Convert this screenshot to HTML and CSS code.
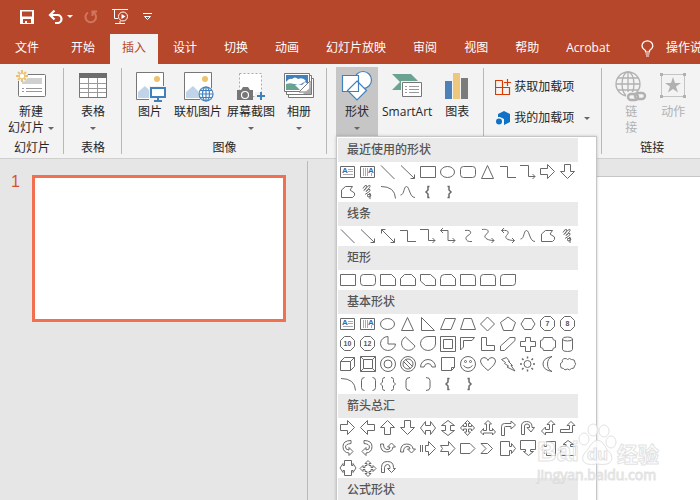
FILE: index.html
```html
<!DOCTYPE html>
<html lang="zh-CN">
<head>
    <meta charset="UTF-8">
    <meta name="viewport" content="width=device-width, initial-scale=1.0">
    <title>PowerPoint</title>
    <link rel="stylesheet" href="styles.css">
</head>
<body>
    <header class="titlebar">
        <button class="quick save" aria-label="保存">
            <svg width="14" height="14" viewBox="0 0 14 14"><path d="M0 0h14v14H0zM2 1.5v5h10v-5zM3 9v4h2v-2h2v2h4V9z" fill="#fff" fill-rule="evenodd"/></svg>
        </button>
        <button class="quick undo" aria-label="撤消">
            <svg width="26" height="14" viewBox="0 0 26 14"><path d="M2 5h7.5a4 4 0 0 1 0 8H7M6.500 .5L2 5l4.500 4.500" fill="none" stroke="#fff" stroke-width="2.200"/><path d="M19 5h6l-3 3z" fill="#fff"/></svg>
        </button>
        <button class="quick redo" aria-label="重复">
            <svg width="14" height="14" viewBox="0 0 14 14"><path d="M4 2.500a5.300 5.300 0 1 0 5.500 0M8.500 6V1.500H13" fill="none" stroke="#d07660" stroke-width="2"/></svg>
        </button>
        <button class="quick show" aria-label="从头开始">
            <svg width="17" height="16" viewBox="0 0 17 16" fill="none" stroke="#fff"><path d="M0 .5h16M2.500 1v8.500H6M8 12v2.500M3 14.500h10"/><circle cx="11" cy="7.500" r="4.500"/><path d="M9.500 5v5l4-2.500z" fill="#fff" stroke="none"/></svg>
        </button>
        <button class="quick" aria-label="自定义快速访问工具栏">
            <svg width="9" height="8" viewBox="0 0 9 8" fill="none" stroke="#fff"><path d="M0 .5h9M1.500 3.500h6l-3 3z"/></svg>
        </button>
    </header>

    <nav class="tabs">
        <a class="tab file" href="#">文件</a>
        <a class="tab" href="#">开始</a>
        <a class="tab active" href="#">插入</a>
        <a class="tab" href="#">设计</a>
        <a class="tab" href="#">切换</a>
        <a class="tab" href="#">动画</a>
        <a class="tab" href="#">幻灯片放映</a>
        <a class="tab" href="#">审阅</a>
        <a class="tab" href="#">视图</a>
        <a class="tab" href="#">帮助</a>
        <a class="tab" href="#">Acrobat</a>
        <a class="tab tell" href="#">
            <svg width="13" height="17" viewBox="0 0 13 17" fill="none" stroke="#fff" stroke-width="1.200"><path d="M4.500 12V10.500Q1 8.500 1 5.800a5.400 5 0 0 1 10.800 0Q11.800 8.500 8.500 10.500V12zM4.500 14h4M5 16h3"/></svg>
            操作说
        </a>
    </nav>

    <section class="ribbon">
        <div class="group slides">
            <div class="tools">
                <button class="tool">
                    <svg width="32" height="32" viewBox="0 0 32 32"><rect x="3.500" y="4.500" width="27" height="22" rx="1" fill="#fff" stroke="#777"/><path d="M7 8h20v6H7z" fill="#d0d0d0"/><path d="M7 18.500h2M11 18.500h16M7 21.500h2M11 21.500h16" stroke="#999"/><circle cx="7" cy="6" r="6" fill="#f3f3f3"/><path d="M7 0v12M1 6h12M3 2l8 8M11 2l-8 8" stroke="#ecc26e" stroke-width="2"/><circle cx="7" cy="6" r="2.200" fill="#fff"/></svg>
                    <span>新建</span>
                    <span>幻灯片<i class="caret"></i></span>
                </button>
            </div>
            <div class="caption">幻灯片</div>
        </div>
        <div class="group table">
            <div class="tools">
                <button class="tool">
                    <svg width="32" height="32" viewBox="0 0 32 32"><path d="M2.500 3.500h27v24h-27z" fill="#fff" stroke="#777"/><path d="M2 3h28v5H2z" fill="#6d6d6d"/><path d="M3 13.500h26M3 18.500h26M3 22.500h26M11.500 8v19M20.500 8v19" stroke="#999"/></svg>
                    <span>表格</span>
                    <span><i class="caret"></i></span>
                </button>
            </div>
            <div class="caption">表格</div>
        </div>
        <div class="group images">
            <div class="tools">
                <button class="tool">
                    <svg width="32" height="32" viewBox="0 0 32 32"><path d="M2.500 2.500h27v27h-27z" fill="#fff" stroke="#777"/><circle cx="23" cy="9" r="3" fill="#ecc26e"/><path d="M4 28v-6l7-6 6 6v6z" fill="#c0d3e8"/><path d="M15 16h17v16H15z" fill="#f3f3f3"/><path d="M17 18h14v9H17z" fill="#fff" stroke="#4180bd" stroke-width="2"/><path d="M24 27v4M20 31h8" stroke="#4180bd" stroke-width="2"/></svg>
                    <span>图片</span>
                </button>
                <button class="tool">
                    <svg width="32" height="32" viewBox="0 0 32 32"><path d="M2.500 2.500h27v27h-27z" fill="#fff" stroke="#777"/><circle cx="23" cy="9" r="3" fill="#ecc26e"/><path d="M4 28v-6l7-6 6 6v6z" fill="#c0d3e8"/><circle cx="24" cy="24" r="8" fill="#f3f3f3"/><g fill="#fff" stroke="#4180bd" stroke-width="1.200"><circle cx="24" cy="24" r="7"/><ellipse cx="24" cy="24" rx="3.500" ry="7"/><path d="M17 24h14M24 17v14M18 20.500h12M18 27.500h12"/></g></svg>
                    <span>联机图片</span>
                </button>
                <button class="tool">
                    <svg width="32" height="32" viewBox="0 0 32 32"><path d="M4.500 3.500h22v23h-22z" fill="#fff" stroke="#aaa" stroke-dasharray="2 2"/><path d="M2 20h4l2-3h5l2 3h3v10H2z" fill="#777"/><circle cx="10" cy="25" r="3.500" fill="#777" stroke="#fff" stroke-width="1.200"/><path d="M20 22h10v9H20z" fill="#f3f3f3"/><path d="M26 22v8M22 26h8" stroke="#4180bd" stroke-width="2"/></svg>
                    <span>屏幕截图</span>
                    <span><i class="caret"></i></span>
                </button>
                <button class="tool">
                    <svg width="32" height="32" viewBox="0 0 32 32" stroke="#777"><path d="M5.500 8.500h25v19h-25z" fill="#fff"/><path d="M3.500 5.500h25v19h-25z" fill="#fff"/><path d="M1.500 3.500h25v18h-25z" fill="#fff"/><path d="M3 5h22v9l-3-2-3 3-4-1-12 3z" fill="#4180bd" stroke="none"/><path d="M3 12q3-4 6-3 3-3 6 0 5-2 8 2l-5 3H3z" fill="#fff" stroke="none"/><path d="M3 14q6-2 9 1l5 5H3z" fill="#6aa392" stroke="none"/><path d="M16 22l11-11v11z" fill="#fff"/><path d="M21 23l7-6v7h-8z" fill="#aaa" stroke="none"/></svg>
                    <span>相册</span>
                    <span><i class="caret"></i></span>
                </button>
            </div>
            <div class="caption">图像</div>
        </div>
        <div class="group illustrations">
            <div class="tools">
                <div class="dropdown">
                    <button class="tool open" aria-expanded="true">
                        <svg width="32" height="32" viewBox="0 0 32 32" fill="#fff" stroke="#4180bd" stroke-width="1.200"><circle cx="22" cy="10" r="8.500"/><path d="M1.500 5.500h16v16h-16zM16 11l9.500 9.500L16 30l-9.500-9.500z"/></svg>
                        <span>形状</span>
                        <span><i class="caret"></i></span>
                    </button>
                    <div class="gallery" id="gallery"></div>
                </div>
                <button class="tool">
                    <svg width="32" height="32" viewBox="0 0 32 32"><path d="M1 4h19l8 8-8 8H1l8-8z" fill="#6aa392"/><path d="M10 11h22v17H10z" fill="#f3f3f3"/><path d="M11.500 12.500h19v14h-19z" fill="#fff" stroke="#777"/><path d="M14 16.500h2M18 16.500h10M14 19.500h2M18 19.500h10M14 22.500h2M18 22.500h10" stroke="#999"/></svg>
                    <span>SmartArt</span>
                </button>
                <button class="tool">
                    <svg width="32" height="32" viewBox="0 0 32 32"><path d="M4 11h7v18H4z" fill="#4c82b8"/><path d="M12 3h7v26h-7z" fill="#ecc77c"/><path d="M20 8h7v21h-7z" fill="#7b7b7b"/></svg>
                    <span>图表</span>
                </button>
            </div>
        </div>
        <div class="group addins">
            <button class="row">
                <svg width="16" height="16" viewBox="0 0 16 16" fill="none" stroke="#d83b01" stroke-width="1.200"><path d="M7.500 1.500h-7v14h14V8.500H.5M7.500 1.500v14M12.500 0v7M9 3.500h7"/></svg>
                获取加载项
            </button>
            <button class="row">
                <svg width="16" height="16" viewBox="0 0 16 16" fill="#0f72c6"><path d="M3 4l6-3 6 3v8l-6 3V9L5 7H3z"/><circle cx="4" cy="11.500" r="3"/></svg>
                我的加载项<i class="caret"></i>
            </button>
        </div>
        <div class="group links">
            <div class="tools">
                <button class="tool" disabled>
                    <svg width="32" height="32" viewBox="0 0 32 32" fill="none" stroke="#b1b1b1" stroke-width="1.300"><circle cx="13" cy="14" r="12"/><ellipse cx="13" cy="14" rx="6" ry="12"/><path d="M13 2v24M1 14h24M3 8h20M3 20h20"/><path d="M11 22h21v9H11z" fill="#f3f3f3" stroke="none"/><rect x="13" y="24" width="10" height="6" rx="3" stroke-width="2.400"/><rect x="20" y="23" width="10" height="6" rx="3" stroke-width="2.400"/></svg>
                    <span>链</span>
                    <span>接</span>
                </button>
                <button class="tool" disabled>
                    <svg width="32" height="32" viewBox="0 0 32 32" fill="#b1b1b1"><path d="M4.500 4.500h23v22h-23z" fill="none" stroke="#c4c4c4"/><path d="M3 3h3v3H3zM26 3h3v3h-3zM3 25h3v3H3zM26 25h3v3h-3zM16 7l2 6h6l-5 3.500 2 6-5-3.500-5 3.500 2-6L8 13h6z"/></svg>
                    <span>动作</span>
                </button>
            </div>
            <div class="caption">链接</div>
        </div>
    </section>

    <main class="workspace">
        <aside class="thumbs">
            <span class="number">1</span>
            <a class="thumb" href="#" aria-label="幻灯片 1"></a>
        </aside>
        <div class="editor">
            <div class="slide"></div>
        </div>
    </main>

    <svg class="watermark" width="130" height="66" viewBox="0 0 130 66">
        <text x="3" y="43" class="mark latin">Bai</text>
        <g class="mark">
            <ellipse cx="50" cy="21" rx="5" ry="6"/>
            <ellipse cx="59" cy="12" rx="5" ry="6"/>
            <ellipse cx="70" cy="13" rx="5" ry="6"/>
            <ellipse cx="77" cy="24" rx="5" ry="6"/>
            <path d="M63 22q5 0 8 6t6 8q3 8-4 10-4 1-10 0-6 1-10 0-7-3-3-10 3-3 6-8t7-6z"/>
        </g>
        <text x="53" y="42" class="mark du">du</text>
        <text x="83" y="44" class="mark cjk">经验</text>
        <text x="3" y="62" class="mark url">jingyan.baidu.com</text>
    </svg>
    <script src="shapes.js"></script>
</body>
</html>
```

FILE: styles.css
```css
* {
    box-sizing: border-box;
}

body {
    margin: 0;
    height: 100vh;
    display: flex;
    flex-direction: column;
    overflow: hidden;
    background: #e6e6e6;
    color: #262626;
    font-family: "Open Sans", "Noto Sans CJK SC", sans-serif;
    font-size: 12px;
    line-height: 16px;
}

button {
    padding: 0;
    border: 0;
    background: none;
    color: inherit;
    font: inherit;
}

a {
    color: inherit;
    text-decoration: none;
}

svg {
    display: block;
    flex: none;
}

.titlebar {
    display: flex;
    align-items: center;
    gap: 14px;
    height: 34px;
    padding-left: 20px;
    background: #b7472a;
}

.titlebar .undo {
    margin-right: -4px;
}

.tabs {
    display: flex;
    gap: 3px;
    height: 30px;
    overflow: hidden;
    background: #b7472a;
    color: #fff;
    white-space: nowrap;
}

.tab {
    flex: none;
    padding: 6px 12px;
}

.tab.file {
    padding-left: 15px;
    padding-right: 17px;
}

.tab.active {
    background: #f3f3f3;
    color: #b7472a;
}

.tab.tell {
    display: flex;
    gap: 12px;
    padding-left: 16px;
}

.ribbon {
    display: flex;
    height: 95px;
    padding-top: 3px;
    background: #f3f3f3;
    border-bottom: 1px solid #d0d0d0;
}

.group {
    position: relative;
    display: flex;
    flex-direction: column;
    flex: none;
    padding: 0 6px;
}

/* separator line on the right of each group */
.group::after {
    content: "";
    position: absolute;
    top: 1px;
    right: 0;
    bottom: 4px;
    width: 1px;
    background: #b8b8b8;
}

.group.links::after {
    display: none;
}

.tools {
    display: flex;
    gap: 1px;
    height: 70px;
}

.caption {
    padding-top: 3px;
    text-align: center;
}

.tool {
    display: flex;
    flex-direction: column;
    align-items: center;
    min-width: 42px;
    height: 70px;
    padding: 3px 2px 0;
    white-space: nowrap;
}

.tool svg {
    margin-bottom: 2px;
}

.tool.open {
    background: #c6c6c6;
}

.tool:disabled {
    color: #b1b1b1;
}

.caret {
    display: inline-block;
    border: 3px solid transparent;
    border-top-color: #666;
    border-bottom: 0;
    vertical-align: 2px;
}

.slides .caret {
    margin-left: 4px;
}

.slides {
    width: 64px;
}

.table {
    width: 58px;
    padding: 0 8px;
}

.images {
    padding: 0 7px;
}

.illustrations {
    padding: 0 6px 0 9px;
}

.illustrations .tools {
    gap: 2px;
}

.addins {
    gap: 15px;
    width: 118px;
    padding: 12px 11px 0;
}

.row {
    display: flex;
    align-items: center;
    gap: 3px;
    white-space: nowrap;
}

.row .caret {
    margin-left: 7px;
}

.links {
    padding-left: 8px;
}

.links .tools {
    gap: 0;
}

.dropdown {
    position: relative;
}

.gallery {
    position: absolute;
    z-index: 2;
    top: 69px;
    left: 0;
    width: 261px;
    padding: 1px;
    background: #fff;
    border: 1px solid #c6c6c6;
    box-shadow: 0 0 3px rgba(0, 0, 0, 0.2);
}

.gallery h2 {
    width: 240px;
    margin: 0;
    padding: 4px 9px;
    background: #eaeaea;
    color: #555;
    font-size: 12px;
    font-weight: 500;
    line-height: 16px;
}

.shapes {
    display: grid;
    grid-template-columns: repeat(12, 20px);
    grid-auto-rows: 20px;
}

.shapes svg {
    fill: none;
    stroke: #696969;
}

.shapes text {
    fill: #555;
    stroke: none;
    font: bold 7px "Liberation Sans", sans-serif;
    text-anchor: middle;
}

.shapes .letter {
    fill: #2e6db4;
    font-size: 8px;
}

.workspace {
    display: flex;
    flex: 1;
    padding-top: 2px;
}

.thumbs {
    display: flex;
    align-items: flex-start;
    gap: 12px;
    width: 44%;
    padding: 14px 21px 0 11px;
    border-right: 1px solid #bababa;
}

.number {
    color: #d35334;
    font: 16px/14px "Liberation Sans", sans-serif;
}

.thumb {
    flex: 1;
    aspect-ratio: 254 / 147;
    background: #fff;
    border: 3px solid #f07050;
}

.editor {
    display: flex;
    flex: 1;
    padding: 15px 0 0 56px;
}

.slide {
    flex: 1;
    background: #fff;
    border-top: 1px solid #c6c6c6;
}

.watermark {
    position: absolute;
    z-index: 3;
    right: 36px;
    bottom: 16px;
    opacity: 0.8;
}

.mark {
    fill: #fff;
    stroke: #dcdcdc;
    stroke-width: 1px;
}

.mark.latin {
    font: bold 27px "Liberation Sans", sans-serif;
}

.mark.du {
    font: bold 17px "Liberation Sans", sans-serif;
}

.mark.cjk {
    font: bold 21px "Noto Sans CJK SC", sans-serif;
}

.mark.url {
    font: 14px "Open Sans", sans-serif;
}
```

FILE: shapes.js
```js
// every shape is drawn in a 20x20 cell
const octagon = '<path d="M6.500 2.500h6l4 4v6l-4 4h-6l-4-4v-6z"/>';
const path = d => `<path d="${d}"/>`;

const shapes = {
    textBox: '<path d="M2.500 4.500h14v11h-14z"/><path d="M10 7.500h5M10 9.500h5M5 12.500h10" stroke="#aaa"/><text class="letter" x="7" y="11">A</text>',
    verticalTextBox: '<path d="M2.500 4.500h14v11h-14z"/><path d="M5.500 6v8M7.500 6v8M9.500 6v8M13.500 11v3" stroke="#aaa"/><text class="letter" x="13" y="11">A</text>',
    line: path('M3 3.500L16.500 17'),
    arrow: path('M3 3.500L16.500 16.500M16.500 12.500v4h-4'),
    doubleArrow: path('M3.500 3.500l13 13M16.500 12.500v4h-4M3.500 7.500v-4h4'),
    rect: path('M2.500 4.500h15v11h-15z'),
    ellipse: '<ellipse cx="9.500" cy="10" rx="7" ry="5.500"/>',
    roundRect: '<rect x="2.500" y="4.500" width="15" height="11" rx="3"/>',
    triangle: path('M9.500 3.500l6 13h-12z'),
    elbow: path('M2 4.500h7.500v11H18'),
    elbowArrow: path('M2 3.500h8.500v11H17M14.500 12l2.500 2.500-2.500 2.500'),
    elbowDouble: path('M2.500 4.500h7.500v10h7M14.500 12l2.500 2.500-2.500 2.500M5 2L2.500 4.500 5 7'),
    right: path('M2.500 6.500h7v-4l7 7-7 7v-4h-7z'),
    left: path('M16.500 6.500h-7v-4l-7 7 7 7v-4h7z'),
    up: path('M6.500 16.500v-7h-4l7-7 7 7h-4v7z'),
    down: path('M6.500 2.500v7h-4l7 7 7-7h-4v-7z'),
    freeform: path('M3.500 15.500V8l4-3.500h7L12 8l4.500 3v2.500l-2 2z'),
    scribble: path('M5 6.500q2-4 3.500-3 1 1-2.500 5 5-6 6-5 1 1-4 6 3-3 4-2t-2 3-3 2M9 13q4-2 4 0t-3 2q-2-1 2-4v6'),
    arc: path('M3 4.500q14 0 14.500 12'),
    curve: path('M2.500 13c4 0 3-8.500 6-8.500s3 11 8.500 11'),
    leftBrace: '<path d="M11.500 4.500H10V8l-2 2 2 2v3.500h1.500" stroke-width="1.500"/>',
    rightBrace: '<path d="M9.500 4.500H11V8l2 2-2 2v3.500H9.500" stroke-width="1.500"/>',
    curved: path('M7 4.500c7-1 7 3 3 5s-2 7 4 6'),
    curvedArrow: path('M4 3.500c8-1 7 3 4 5s0 6 8 6M13.500 12l2.500 2.500-2.500 2.500'),
    curvedDouble: path('M3.500 4.500c9-1 7 3 5 5s0 5 8 5M14 12l2.500 2.500L14 17M6 2L3.500 4.500 6 7'),
    snip1: path('M2.500 4.500h11l4 4v7h-15z'),
    snip2: path('M6.500 4.500h7l4 4v7h-15v-7z'),
    snipDiag: path('M2.500 4.500h10l5 4.500v6.500h-10l-5-4.500z'),
    snipRound: path('M6.500 4.500h7l4 4v7h-15v-7q0-4 4-4z'),
    round1: path('M2.500 4.500h12q3 0 3 3v8h-15z'),
    round2: path('M5.500 4.500h9q3 0 3 3v8h-15v-8q0-3 3-3z'),
    roundDiag: path('M5.500 4.500h12v8q0 3-3 3h-12v-8q0-3 3-3z'),
    rightTriangle: path('M3.500 3.500v13h13z'),
    parallelogram: path('M7 4.500h10.500l-4.500 11H2.500z'),
    trapezoid: path('M6 4.500h7.500l4 11h-15z'),
    diamond: path('M9.500 3l7 7-7 7-7-7z'),
    pentagon: path('M10 3l7.500 5.500-3 8h-9l-3-8z'),
    hexagon: path('M6.500 4.500h7l3.500 5.500-3.500 5.500h-7L3 10z'),
    heptagon: octagon + '<text x="9.500" y="12">7</text>',
    octagon: octagon + '<text x="9.500" y="12">8</text>',
    decagon: octagon + '<text x="9.500" y="12">10</text>',
    dodecagon: octagon + '<text x="9.500" y="12">12</text>',
    pie: path('M10 2.500a7.500 7 0 1 0 7.500 7.500H10z'),
    chord: path('M7.500 3a7 7 0 1 0 9.500 9z'),
    teardrop: path('M17.500 2.500h-7.500a7.500 7 0 1 0 7.500 7.500z'),
    frame: path('M2.500 2.500h15v15h-15zM5.500 5.500h9v9h-9z'),
    halfFrame: path('M2.500 3.500h14L14 6.500H5.500V13l-3 3z'),
    lShape: path('M3.500 3.500h5v8h8v5h-13z'),
    stripe: path('M12 3.500h5v3L6.500 16.500h-4V12z'),
    plus: path('M7.500 3.500h5v4h5v5h-5v5h-5v-5h-5v-5h5z'),
    plaque: path('M5.500 3.500h9q0 3 3 3v7q-3 0-3 3h-9q0-3-3-3v-7q3 0 3-3z'),
    can: path('M4.500 5v10.500q0 2 5 2t5-2V5M4.500 5q0-2 5-2t5 2-5 2-5-2z'),
    cube: path('M2.500 7.500h10v9h-10zM2.500 7.500l4-4h10l-4 4M16.500 3.500v9l-4 4'),
    bevel: path('M2.500 2.500h15v15h-15zM5.500 5.500h9v9h-9zM2.500 2.500l3 3M17.500 2.500l-3 3M2.500 17.500l3-3M17.500 17.500l-3-3'),
    donut: '<circle cx="10" cy="10" r="7.500"/><circle cx="10" cy="10" r="4"/>',
    noSymbol: '<circle cx="10" cy="10" r="7.500"/><circle cx="10" cy="10" r="5"/><path d="M5.500 7.500l7 7M7.500 5.500l7 7"/>',
    blockArc: path('M2.500 13a7.500 7.500 0 0 1 15 0h-3.500q-1-3.500-4-3.500t-4 3.500z'),
    foldedCorner: path('M3.500 3.500h13v10l-3 3h-10zM16.500 13.500h-3v3'),
    smiley: '<circle cx="10" cy="10" r="7.500"/><circle cx="7.500" cy="7.500" r="1"/><circle cx="12.500" cy="7.500" r="1"/><path d="M5.500 11.500q4.500 5 9 0"/>',
    heart: path('M10 16.500Q2.500 10.500 2.500 7q0-3 3.500-3.500 3 0 4 3 1-3 4-3 3.500.5 3.500 3.500 0 3.500-7.500 9.500z'),
    lightning: path('M3.500 5.500l5-2 3 4H10.500l4 4h-1.500l4 5.500-8-4 1.500-1-4-2.500 1-1z'),
    sun: '<circle cx="9.500" cy="10" r="3.500"/><path d="M9.500 2.500v2M9.500 15.500v2M2 10h2M15 10h2M4 4.500l1.500 1.500M13.500 14l1.500 1.500M4 15.500L5.500 14M13.500 6L15 4.500" stroke-width="1.500"/>',
    moon: path('M14 2.500q-9 1.500-9 7.500t9 7.500q-4.500-2-4.500-7.500T14 2.500z'),
    cloud: path('M4.500 8q-1-3 2.500-3.500 2 0 2.500 1 2-2 4 0 3.500-.5 3.500 3 1.500 2-.5 3.500 0 3-3 2.500-2 2.500-4 .5-3 2-4-.5-3.500 0-3-3-1-2.500 2-3.500z'),
    doubleBracket: path('M6.500 3.500q-3 0-3 3v7q0 3 3 3M14.500 3.500q3 0 3 3v7q0 3-3 3'),
    doubleBrace: path('M7 3.500q-2.500 0-2.500 2v2.500l-2 2 2 2v2.500q0 2 2.500 2M13 3.500q2.500 0 2.500 2v2.500l2 2-2 2v2.500q0 2-2.500 2'),
    leftBracket: path('M12 3.500q-4 0-4 3v7q0 3 4 3'),
    rightBracket: path('M8 3.500q4 0 4 3v7q0 3-4 3'),
    leftRight: path('M2.500 10l5-6.500v4h5v-4l5 6.500-5 6.500v-4h-5v4z'),
    upDown: path('M10 2.500l6.500 5h-4v5h4l-6.500 5-6.500-5h4v-5h-4z'),
    quad: path('M9.500 2.500l3 3h-2v3h3v-2l3 3.500-3 3v-2h-3v3h2l-3 3.500-3-3.500h2v-3h-3v2l-3-3 3-3.500v2h3v-3h-2z'),
    leftRightUp: path('M10 2.500l3.500 3.500h-2v6.500h3v-2l3 3.500-3 3v-2h-9v2l-3-3 3-3.500v2h3V6h-2z'),
    bent: path('M3.500 17.500v-9q0-3 3-3h6.500V3l4.500 4-4.500 4V8.500H7.500q-1 0-1 1v8z'),
    uTurn: path('M3.500 16.500V8q0-4.500 5-4.500t5.500 4.500v1.500h2.500L13 14l-4-4.500h2.500V8q0-2-2.500-2t-2.500 2v8.500z'),
    leftUp: path('M13 2.500l4 4h-2.500v8h-7v2.500l-4-4 4-4v2.500h4v-5H9z'),
    bentUp: path('M13 3.500l4 4h-2.500v7h-12v-3h9v-4H9z'),
    curvedRight: path('M13 2.500q-8 0-8 6t6 6.500v2.500l4-4-4-4V12q-3.500 0-3.500-3T13 5.500z'),
    curvedLeft: path('M6 2.500q8 0 8 6T8 15v2.500l-4-4 4-4V12q3.500 0 3.500-3T6 5.500z'),
    curvedUp: path('M2.500 6q0 8 6 8t6.500-5h2.500l-4-4-4 4H12q0 3-3 2.500Q5.500 11 5.500 6z'),
    curvedDown: path('M2.500 14q0-8 6-8t6.500 5h2.500l-4 4-4-4H12q0-3-3-2.500-3.500.5-3.500 5.500z'),
    striped: path('M2.500 7v7M4.500 7v7M7.500 7.500h3v-4l7 7-7 7v-4h-3z'),
    notched: path('M2.500 7.500h8v-4l6.500 7-6.500 7v-4h-8l2-3z'),
    homePlate: path('M2.500 5.500h9.500l5 5-5 5H2.500z'),
    chevron: path('M3 5.500h6.500l5 5-5 5H3l5-5z'),
    calloutRight: path('M2.500 3.500h9v5h2v-3l4 5-4 5v-3h-2v5h-9z'),
    calloutDown: path('M2.500 2.500h15v9h-5v2h3l-5 4-5-4h2v-2h-5z'),
    calloutLeft: path('M17.500 3.500h-9v5h-2v-3l-4 5 4 5v-3h2v5h9z'),
    calloutUp: path('M2.500 17.500h15v-9h-5v-2h3l-5.500-4-5 4h3v2h-5z'),
    calloutLeftRight: path('M6.500 2.500h7v5h1.500v-2l3 4.500-3 4.500v-2h-1.500v5h-7v-5H5v2L2 10l3-4.500v2h1.500z'),
    calloutQuad: path('M10 2.500l3 3h-2v2h2v2h2v-2l3 3-3 3v-2h-2v2h-2v2h2l-3 3-3-3h2v-2H7v-2H5v2l-3-3 3-3v2h2v-2h2v-2H7z'),
    circular: path('M3.500 14.500v-5q0-6 6-6t6 6v1h2l-4 4-4-4h2.500v-1q0-3-2.500-3t-3 3v5z')
};

const gallery = [
    ['最近使用的形状', 'textBox verticalTextBox line arrow rect ellipse roundRect triangle elbow elbowArrow right down freeform scribble arc curve leftBrace rightBrace'],
    ['线条', 'line arrow doubleArrow elbow elbowArrow elbowDouble curved curvedArrow curvedDouble curve freeform scribble'],
    ['矩形', 'rect roundRect snip1 snip2 snipDiag snipRound round1 round2 roundDiag'],
    ['基本形状', 'textBox verticalTextBox ellipse triangle rightTriangle parallelogram trapezoid diamond pentagon hexagon heptagon octagon decagon dodecagon pie chord teardrop frame halfFrame lShape stripe plus plaque can cube bevel donut noSymbol blockArc foldedCorner smiley heart lightning sun moon cloud arc doubleBracket doubleBrace leftBracket rightBracket leftBrace rightBrace'],
    ['箭头总汇', 'right left up down leftRight upDown quad leftRightUp bent uTurn leftUp bentUp curvedRight curvedLeft curvedUp curvedDown striped notched homePlate chevron calloutRight calloutDown calloutLeft calloutUp calloutLeftRight calloutQuad circular'],
    ['公式形状', '']
];

document.getElementById('gallery').innerHTML = gallery.map(([title, names]) => {
    const buttons = names.split(' ').filter(Boolean).map(name =>
        `<button aria-label="${name}"><svg width="20" height="20" viewBox="0 0 20 20">${shapes[name]}</svg></button>`
    );
    return `<h2>${title}</h2><div class="shapes">${buttons.join('')}</div>`;
}).join('');
```
